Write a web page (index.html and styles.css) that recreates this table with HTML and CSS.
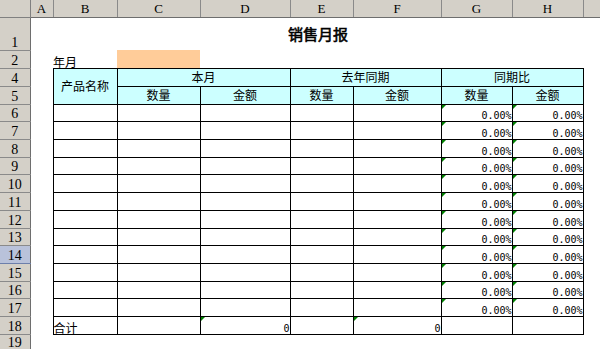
FILE: index.html
```html
<!DOCTYPE html>
<html lang="zh">
<head>
<meta charset="utf-8">
<title>销售月报</title>
<link rel="stylesheet" href="styles.css">
</head>
<body>
<table class="sheet">
  <colgroup>
    <col class="w-rh"><col class="w-a"><col class="w-b"><col class="w-c"><col class="w-d"><col class="w-e"><col class="w-f"><col class="w-g"><col class="w-h"><col class="w-x">
  </colgroup>
  <tr class="r-hdr">
    <th class="corner"></th><th class="ch">A</th><th class="ch">B</th><th class="ch">C</th><th class="ch">D</th><th class="ch">E</th><th class="ch">F</th><th class="ch">G</th><th class="ch">H</th><th class="ch"></th>
  </tr>
  <tr class="r-title">
    <th class="rh">1</th><td></td><td colspan="7" class="title">销售月报</td><td></td>
  </tr>
  <tr class="r-std">
    <th class="rh">2</th><td></td><td class="lbl">年月</td><td class="orange"></td><td></td><td></td><td></td><td></td><td></td><td></td>
  </tr>
  <tr class="r-std">
    <th class="rh">4</th><td></td><td rowspan="2" class="t hd">产品名称</td><td colspan="2" class="t hd">本月</td><td colspan="2" class="t hd">去年同期</td><td colspan="2" class="t hd">同期比</td><td></td>
  </tr>
  <tr class="r-std5">
    <th class="rh">5</th><td></td><td class="t hd">数量</td><td class="t hd">金额</td><td class="t hd">数量</td><td class="t hd">金额</td><td class="t hd">数量</td><td class="t hd">金额</td><td></td>
  </tr>
  <tr class="r-row"><th class="rh">6</th><td></td><td class="t"></td><td class="t"></td><td class="t"></td><td class="t"></td><td class="t"></td><td class="t num"><i class="tri"></i>0.00%</td><td class="t num"><i class="tri"></i>0.00%</td><td></td></tr>
  <tr class="r-row"><th class="rh">7</th><td></td><td class="t"></td><td class="t"></td><td class="t"></td><td class="t"></td><td class="t"></td><td class="t num"><i class="tri"></i>0.00%</td><td class="t num"><i class="tri"></i>0.00%</td><td></td></tr>
  <tr class="r-row"><th class="rh">8</th><td></td><td class="t"></td><td class="t"></td><td class="t"></td><td class="t"></td><td class="t"></td><td class="t num"><i class="tri"></i>0.00%</td><td class="t num"><i class="tri"></i>0.00%</td><td></td></tr>
  <tr class="r-row"><th class="rh">9</th><td></td><td class="t"></td><td class="t"></td><td class="t"></td><td class="t"></td><td class="t"></td><td class="t num"><i class="tri"></i>0.00%</td><td class="t num"><i class="tri"></i>0.00%</td><td></td></tr>
  <tr class="r-row"><th class="rh">10</th><td></td><td class="t"></td><td class="t"></td><td class="t"></td><td class="t"></td><td class="t"></td><td class="t num"><i class="tri"></i>0.00%</td><td class="t num"><i class="tri"></i>0.00%</td><td></td></tr>
  <tr class="r-row"><th class="rh">11</th><td></td><td class="t"></td><td class="t"></td><td class="t"></td><td class="t"></td><td class="t"></td><td class="t num"><i class="tri"></i>0.00%</td><td class="t num"><i class="tri"></i>0.00%</td><td></td></tr>
  <tr class="r-row"><th class="rh">12</th><td></td><td class="t"></td><td class="t"></td><td class="t"></td><td class="t"></td><td class="t"></td><td class="t num"><i class="tri"></i>0.00%</td><td class="t num"><i class="tri"></i>0.00%</td><td></td></tr>
  <tr class="r-row"><th class="rh">13</th><td></td><td class="t"></td><td class="t"></td><td class="t"></td><td class="t"></td><td class="t"></td><td class="t num"><i class="tri"></i>0.00%</td><td class="t num"><i class="tri"></i>0.00%</td><td></td></tr>
  <tr class="r-row"><th class="rh sel">14</th><td></td><td class="t"></td><td class="t"></td><td class="t"></td><td class="t"></td><td class="t"></td><td class="t num"><i class="tri"></i>0.00%</td><td class="t num"><i class="tri"></i>0.00%</td><td></td></tr>
  <tr class="r-row"><th class="rh">15</th><td></td><td class="t"></td><td class="t"></td><td class="t"></td><td class="t"></td><td class="t"></td><td class="t num"><i class="tri"></i>0.00%</td><td class="t num"><i class="tri"></i>0.00%</td><td></td></tr>
  <tr class="r-row"><th class="rh">16</th><td></td><td class="t"></td><td class="t"></td><td class="t"></td><td class="t"></td><td class="t"></td><td class="t num"><i class="tri"></i>0.00%</td><td class="t num"><i class="tri"></i>0.00%</td><td></td></tr>
  <tr class="r-row"><th class="rh">17</th><td></td><td class="t"></td><td class="t"></td><td class="t"></td><td class="t"></td><td class="t"></td><td class="t num"><i class="tri"></i>0.00%</td><td class="t num"><i class="tri"></i>0.00%</td><td></td></tr>
  <tr class="r-row"><th class="rh">18</th><td></td><td class="t lbl">合计</td><td class="t"></td><td class="t num"><i class="tri"></i>0</td><td class="t"></td><td class="t num"><i class="tri"></i>0</td><td class="t"></td><td class="t"></td><td></td></tr>
  <tr class="r-last"><th class="rh">19</th><td></td><td></td><td></td><td></td><td></td><td></td><td></td><td></td><td></td></tr>
</table>
</body>
</html>
```
FILE: styles.css
```css
html, body {
  margin: 0;
  padding: 0;
  background: #ffffff;
  overflow: hidden;
  width: 600px;
  height: 349px;
}

.sheet {
  border-collapse: collapse;
  table-layout: fixed;
  width: 600px;
  font-family: "Noto Sans CJK SC", "Liberation Sans", sans-serif;
  font-size: 12px;
  color: #000;
}

.w-rh { width: 30px; }
.w-a { width: 23px; }
.w-b { width: 64px; }
.w-c { width: 83px; }
.w-d { width: 90px; }
.w-e { width: 63px; }
.w-f { width: 88px; }
.w-g { width: 71px; }
.w-h { width: 71px; }
.w-x { width: 17px; }

.sheet td, .sheet th {
  padding: 0;
  white-space: nowrap;
  font-weight: normal;
  line-height: 1;
}

.r-hdr { height: 17px; }
.r-title { height: 33px; }
.r-std { height: 18px; }
.r-std5 { height: 18.2px; }
.r-row { height: 17.7px; }
.r-last { height: 15px; }

.corner, .ch, .rh {
  background: #d4d0c8;
  font-family: "Liberation Serif", "DejaVu Serif", serif;
  font-size: 13px;
  color: #000;
}

.corner {
  border-right: 1px solid #808080;
  border-bottom: 1px solid #808080;
}

.ch {
  border-right: 1px solid #8a8a8a;
  border-bottom: 1px solid #6e6e6e;
  text-align: center;
  vertical-align: middle;
}

.rh {
  border-right: 1px solid #6e6e6e;
  border-bottom: 1px solid #8a8a8a;
  text-align: center;
  vertical-align: bottom;
  padding-bottom: 2px;
  font-size: 14px;
}

.r-last .rh {
  vertical-align: top;
  padding: 1px 0 0;
}

.rh.sel {
  background: #b9c2da;
  border-bottom-color: #6d7fab;
}

.title {
  text-align: center;
  vertical-align: middle;
  font-weight: bold;
  font-size: 15px;
  line-height: 18px;
  padding-bottom: 1px;
  -webkit-text-stroke: 0.6px #000;
}

.lbl {
  text-align: left;
  vertical-align: bottom;
  padding-left: 2px;
  padding-bottom: 2px;
}

.orange {
  background: #ffcc99;
}

.t {
  border: 1px solid #000;
}

.hd {
  background: #ccffff;
  text-align: center;
  vertical-align: middle;
}

.num {
  position: relative;
  text-align: right;
  vertical-align: bottom;
  padding-right: 3px;
  padding-bottom: 3px;
  font-family: "DejaVu Sans Mono", "Liberation Mono", monospace;
  font-size: 10px;
}

.tri {
  position: absolute;
  top: 0;
  left: 0;
  width: 0;
  height: 0;
  border-top: 4px solid #008000;
  border-right: 4px solid transparent;
}
```
